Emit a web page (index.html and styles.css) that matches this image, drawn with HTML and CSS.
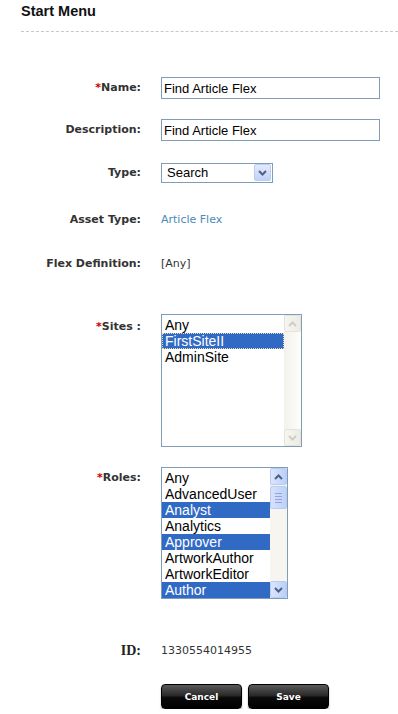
FILE: index.html
```html
<!DOCTYPE html>
<html lang="en">
<head>
  <meta charset="UTF-8">
  <meta name="viewport" content="width=device-width, initial-scale=1.0">
  <title>Start Menu</title>
  <link rel="stylesheet" href="styles.css">
</head>
<body>
  <div class="page-title">Start Menu</div>

  <form class="menu-form">
    <!-- Name -->
    <div class="field field-name">
      <label class="label"><span class="req">*</span>Name:</label>
      <input class="text-input" type="text" value="Find Article Flex">
    </div>

    <div class="field">
      <label class="label">Description:</label>
      <input class="text-input" type="text" value="Find Article Flex">
    </div>

    <div class="field field-type">
      <label class="label">Type:</label>
      <div class="select">
        <span class="select-value">Search</span>
        <span class="select-btn">
          <svg width="9" height="6" viewBox="0 0 9 6"><path d="M1 1 L4.5 4.5 L8 1" fill="none" stroke="#4d6185" stroke-width="2"/></svg>
        </span>
      </div>
    </div>

    <div class="field field-asset">
      <span class="label">Asset Type:</span>
      <span class="value link">Article Flex</span>
    </div>

    <div class="field field-flex">
      <span class="label">Flex Definition:</span>
      <span class="value">[Any]</span>
    </div>

    <!-- Sites -->
    <div class="field field-list field-sites">
      <label class="label"><span class="req">*</span>Sites :</label>
      <div class="listbox sites">
        <ul class="items">
          <li>Any</li>
          <li class="selected focused">FirstSiteII</li>
          <li>AdminSite</li>
        </ul>
        <div class="scrollbar disabled">
          <span class="sb-btn">
            <svg width="9" height="6" viewBox="0 0 9 6"><path d="M1 5 L4.5 1.5 L8 5" fill="none" stroke="#cfcdc4" stroke-width="2"/></svg>
          </span>
          <span class="sb-track"></span>
          <span class="sb-btn">
            <svg width="9" height="6" viewBox="0 0 9 6"><path d="M1 1 L4.5 4.5 L8 1" fill="none" stroke="#cfcdc4" stroke-width="2"/></svg>
          </span>
        </div>
      </div>
    </div>

    <!-- Roles -->
    <div class="field field-list field-roles">
      <label class="label"><span class="req">*</span>Roles:</label>
      <div class="listbox roles">
        <ul class="items">
          <li>Any</li>
          <li>AdvancedUser</li>
          <li class="selected">Analyst</li>
          <li>Analytics</li>
          <li class="selected">Approver</li>
          <li>ArtworkAuthor</li>
          <li>ArtworkEditor</li>
          <li class="selected">Author</li>
        </ul>
        <div class="scrollbar">
          <span class="sb-btn">
            <svg width="9" height="6" viewBox="0 0 9 6"><path d="M1 5 L4.5 1.5 L8 5" fill="none" stroke="#4d6185" stroke-width="2"/></svg>
          </span>
          <span class="sb-track">
            <span class="sb-thumb"><i></i><i></i><i></i><i></i></span>
          </span>
          <span class="sb-btn">
            <svg width="9" height="6" viewBox="0 0 9 6"><path d="M1 1 L4.5 4.5 L8 1" fill="none" stroke="#4d6185" stroke-width="2"/></svg>
          </span>
        </div>
      </div>
    </div>

    <div class="field field-id">
      <span class="label label-id">ID:</span>
      <span class="value">1330554014955</span>
    </div>

    <div class="field field-actions">
      <span class="label"></span>
      <div class="actions">
        <button type="button" class="btn">Cancel</button>
        <button type="button" class="btn">Save</button>
      </div>
    </div>
  </form>
</body>
</html>
```

FILE: styles.css
```css
/* Reset */
* {
  box-sizing: border-box;
  margin: 0;
  padding: 0;
}
body {
  font-family: "DejaVu Sans", Verdana, sans-serif;
  font-size: 11px;
  color: #333;
  background: #fff;
}
.page-title {
  margin-left: 21px;
  height: 32px;
  padding-top: 2px;
  line-height: 18px;
  font-family: "Liberation Sans", Arial, sans-serif;
  font-size: 14.5px;
  font-weight: bold;
  color: #111;
  border-bottom: 1px dashed #c8c8c8;
}

/* Rows */
.field {
  display: flex;
  align-items: center;
  min-height: 22px;
  margin-top: 20px;
}
.label {
  flex: 0 0 141px;
  margin-right: 20px;
  text-align: right;
  font-weight: bold;
  line-height: 14px;
  color: #333;
}
.req {
  color: #c00;
}
.value {
  line-height: 14px;
  color: #333;
}
.link {
  color: #4a8ab8;
}
.field-name { margin-top: 45px; }
.field-type { padding-top: 1px; }
.field-asset { margin-top: 26px; }
.field-flex { margin-top: 22px; }
.field-list { align-items: flex-start; }
.field-sites { margin-top: 39px; }
.field-sites .label { padding-top: 6px; }
.field-roles .label { padding-top: 4px; }
.field-id { margin-top: 41px; }
.label-id {
  font-family: "Liberation Serif", "Times New Roman", serif;
  font-size: 14px;
  color: #222;
}
.field-actions { margin-top: 22px; }

/* Inputs */
.text-input {
  width: 219px;
  height: 22px;
  padding: 0 2px;
  border: 1px solid #7f9db9;
  font-family: "Liberation Sans", Arial, sans-serif;
  font-size: 13px;
  color: #000;
  outline: none;
}
.select {
  display: flex;
  align-items: center;
  width: 112px;
  height: 20px;
  border: 1px solid #7f9db9;
  padding: 1px;
  background: #fff;
}
.select-value {
  flex: 1;
  padding-left: 4px;
  font-family: "Liberation Sans", Arial, sans-serif;
  font-size: 13px;
  color: #000;
}
.select-btn {
  display: flex;
  align-items: center;
  justify-content: center;
  width: 17px;
  height: 17px;
  border: 1px solid #bccdf5;
  border-radius: 2px;
  background: linear-gradient(#e2eafd, #c1d2f7);
}

/* Listboxes */
.listbox {
  display: flex;
  border: 1px solid #7f9db9;
  background: #fff;
}
.listbox.sites {
  width: 141px;
  height: 133px;
}
.listbox.roles {
  width: 127px;
  height: 132px;
}
.items {
  flex: 1;
  list-style: none;
  padding-top: 2px;
  font-family: "Liberation Sans", Arial, sans-serif;
  font-size: 14px;
  color: #000;
  overflow: hidden;
}
.items li {
  height: 16px;
  line-height: 16px;
  padding-left: 3px;
  white-space: nowrap;
}
.items li.selected {
  background: #316ac5;
  color: #fff;
}
.items li.focused {
  outline: 1px dotted #e6e0a8;
  outline-offset: -1px;
}

/* Scrollbar */
.scrollbar {
  display: flex;
  flex-direction: column;
  width: 17px;
  background: #f6f5f0;
}
.sb-btn {
  display: flex;
  align-items: center;
  justify-content: center;
  height: 17px;
  border: 1px solid #b9cbf3;
  border-radius: 2px;
  background: linear-gradient(90deg, #dbe5fd, #bccff7);
}
.sb-track {
  flex: 1;
  padding-top: 1px;
}
.sb-thumb {
  display: flex;
  flex-direction: column;
  align-items: center;
  justify-content: center;
  gap: 2px;
  height: 23px;
  border: 1px solid #b9cbf3;
  border-radius: 2px;
  background: linear-gradient(90deg, #d6e1fc, #c0d1f7);
}
.sb-thumb i {
  display: block;
  width: 7px;
  height: 1px;
  background: #8ea6dc;
}
.scrollbar.disabled {
  background: linear-gradient(90deg, #f3f2ec, #fdfdfa);
}
.scrollbar.disabled .sb-btn {
  border-color: #e6e4da;
  background: linear-gradient(90deg, #f6f5f0, #ecebe4);
}

/* Buttons */
.actions {
  display: flex;
  gap: 6px;
}
.btn {
  width: 81px;
  height: 25px;
  border: 1px solid #000;
  border-radius: 4px;
  background: linear-gradient(#5a5a5a, #2a2a2a 45%, #0a0a0a 55%, #000);
  box-shadow: 0 2px 2px rgba(0, 0, 0, 0.3);
  color: #fff;
  font-family: "DejaVu Sans", Verdana, sans-serif;
  font-size: 9px;
  font-weight: bold;
  cursor: pointer;
}
```
